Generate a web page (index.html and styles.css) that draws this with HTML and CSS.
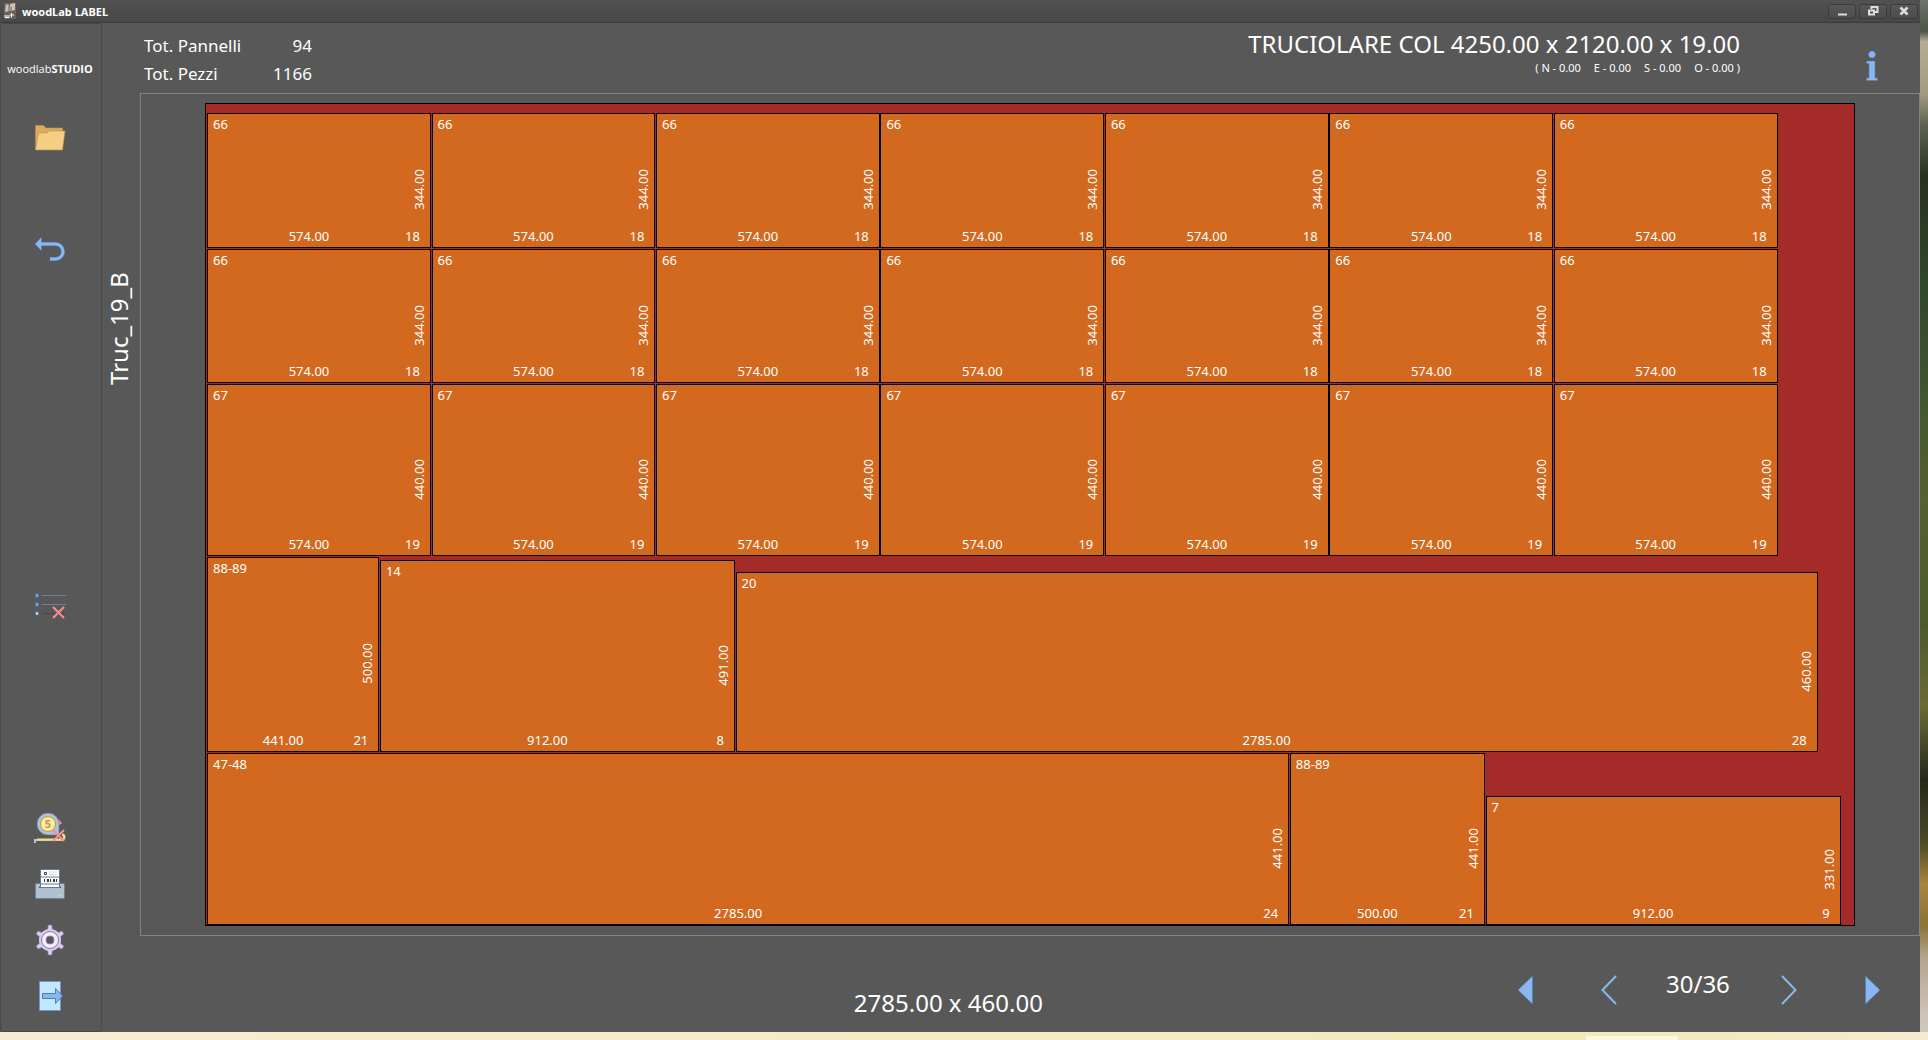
FILE: index.html
```
<!DOCTYPE html>
<html lang="it">
<head>
  <meta charset="UTF-8">
  <title>woodLab LABEL</title>
  <link rel="stylesheet" href="styles.css">
</head>
<body>
  <div class="window">

    <!-- Barra del titolo -->
    <header class="titlebar">
      <svg class="app-icon" viewBox="0 0 12 16">
        <rect width="12" height="16" rx="1" fill="#6d6258"/>
        <path d="M2 1l3 1v6l-4 1zM6 1l5-1v7l-5 1z" fill="#c9c2ba"/>
        <path d="M4 3l4 1v4H4z" fill="#9a9088"/>
        <path d="M1 12v2.500h2V12m0 2.500h2V12M7.500 10v4.500m-1.500-2.500h4" fill="none" stroke="#fff"/>
      </svg>
      <h1>woodLab LABEL</h1>
      <div class="win-buttons">
        <button aria-label="Riduci"><svg viewBox="0 0 12 12"><path d="M2 9.500h9" stroke="#ddd" stroke-width="2"/></svg></button>
        <button aria-label="Ripristina"><svg viewBox="0 0 12 12"><path d="M4.500 4V2h6v5H8M2 5.500h5v4H2z" fill="none" stroke="#ddd" stroke-width="2"/></svg></button>
        <button aria-label="Chiudi"><svg viewBox="0 0 12 12"><path d="M2.500 2.500l7 7m0-7l-7 7" stroke="#ddd" stroke-width="2.500"/></svg></button>
      </div>
    </header>

    <div class="main">

      <!-- Barra laterale -->
      <nav class="sidebar">
        <div class="logo">woodlab<b>STUDIO</b></div>
        <button class="open" aria-label="Apri">
          <svg viewBox="0 0 32 32">
            <path d="M1.500 28V3.500h8l2.500 2.500h16.500v4" fill="#dbab5e" stroke="#c08f45" stroke-width=".6"/>
            <path d="M1.500 28L4.500 11H13l2.500-2H31l-2.500 19z" fill="#f5ce85" stroke="#c08f45" stroke-width=".6"/>
          </svg>
        </button>
        <button class="undo" aria-label="Annulla">
          <svg viewBox="0 0 32 32">
            <path d="M7 10h14.500a7.500 7.500 0 0 1 0 15H16" fill="none" stroke="#4a78b5" stroke-width="4"/>
            <path d="M7.500 3v14L1 10z" fill="#8bb7f0" stroke="#4a78b5" stroke-width=".6"/>
            <path d="M6 10h15.500a7.500 7.500 0 0 1 0 15H16" fill="none" stroke="#8bb7f0" stroke-width="3"/>
          </svg>
        </button>
        <button class="clear" aria-label="Svuota elenco">
          <svg viewBox="0 0 32 32">
            <path d="M8 5.500h24M8 14.500h24" stroke="#6c8290"/>
            <path d="M8 23.500h24" stroke="#474747"/>
            <path d="M1.500 4h3v3h-3zM1.500 13h3v3h-3z" fill="#8bb7f0" stroke="#4a78b5"/>
            <path d="M1.500 22h3v3h-3z" fill="#dff0fe" stroke="#4a78b5"/>
            <path d="M19 17l11 11m0-11L19 28" stroke="#f78f8f" stroke-width="2"/>
          </svg>
        </button>
        <button class="measure" aria-label="Elimina misure">
          <svg viewBox="0 0 32 32">
            <path d="M1 31v-4M2 28h25c4 0 4-5 1-5" fill="none" stroke="#b8c4d0" stroke-width="2"/>
            <path d="M3 27.500h24c5 0 4-5 1-5" fill="none" stroke="#f7dc7c" stroke-width="2"/>
            <path d="M24 7l4 4-4 3z" fill="#f78f8f"/>
            <path d="M14 1a11 11 0 0 0 0 22h11V12A11 11 0 0 0 14 1z" fill="#b0c1d4" stroke="#66798f" stroke-width=".6"/>
            <circle cx="14" cy="12" r="7.500" fill="#fdeaa3" stroke="#ba9b48"/>
            <text x="14" y="16" class="glyph">5</text>
            <path d="M19 18l11 11m0-11L19 29" stroke="#f78f8f" stroke-width="2"/>
          </svg>
        </button>
        <button class="print" aria-label="Stampa etichette">
          <svg viewBox="0 0 32 32">
            <rect x="1.500" y="15.500" width="29" height="15" rx="1" fill="#b0c1d4" stroke="#66798f" stroke-width=".6"/>
            <path d="M5 18.500h22v1.500H5z" fill="#4e5f72"/>
            <path d="M6.500 1.500h19v18h-19z" fill="#fff" stroke="#66798f"/>
            <path d="M7 9h18M7 16h18" stroke="#66798f"/>
            <path d="M10.500 4.500h2v2h-2z" fill="none" stroke="#36404d"/>
            <path d="M15 4h8M15 6.500h8" stroke="#d5dbe0"/>
            <path d="M10 12.500h13" stroke="#36404d" stroke-width="3" stroke-dasharray="1 2 2 1"/>
            <path d="M26 27h1v1h-1z" stroke="#fbe08b"/>
          </svg>
        </button>
        <button class="settings" aria-label="Impostazioni">
          <svg viewBox="0 0 32 32">
            <g fill="#d9cdef" stroke="#8b75a1" stroke-width=".6">
              <path id="teeth" d="M13.500 6l.8-5h3.400l.8 5zM13.500 26l.8 5h3.400l.8-5z"/>
              <use href="#teeth" transform="rotate(60 16 16)"/>
              <use href="#teeth" transform="rotate(120 16 16)"/>
            </g>
            <circle cx="16" cy="16" r="11" fill="#d9cdef"/>
            <circle cx="16" cy="16" r="8.500" fill="#f3eef8" stroke="#8b75a1"/>
            <circle cx="16" cy="16" r="4" fill="#585858" stroke="#8b75a1"/>
          </svg>
        </button>
        <button class="exit" aria-label="Esci">
          <svg viewBox="0 0 32 32">
            <path d="M5.500 1.500h21v29h-21z" fill="#c2e8ff" stroke="#7496c4"/>
            <path d="M8.500 13.500h13v-5l7 7.500-7 7.500v-5h-13z" fill="#8bb7f0" stroke="#4e7ab5"/>
          </svg>
        </button>
      </nav>

      <div class="work">

        <!-- Intestazione pannello -->
        <section class="info">
          <dl class="totals">
            <dt>Tot. Pannelli</dt><dd>94</dd>
            <dt>Tot. Pezzi</dt><dd>1166</dd>
          </dl>
          <div class="material">
            <h2>TRUCIOLARE COL 4250.00 x 2120.00 x 19.00</h2>
            <p><span>( N - 0.00</span><span>E - 0.00</span><span>S - 0.00</span><span>O - 0.00 )</span></p>
          </div>
          <button class="about" aria-label="Informazioni">
            <svg viewBox="0 0 16 32">
              <circle cx="8" cy="4.500" r="3.500" fill="#8bb7f0" stroke="#4e7ab5" stroke-width=".6"/>
              <path d="M2.500 11h8.500v17h2.500v2.500h-11V28H5V13.500H2.500z" fill="#8bb7f0" stroke="#4e7ab5" stroke-width=".6"/>
            </svg>
          </button>
        </section>

        <div class="plan">
          <div class="plan-name">Truc_19_B</div>
          <div class="stage">
            <!-- Schema di taglio, misure in mm -->
            <div class="board" id="board"></div>
          </div>
        </div>

        <!-- Navigazione schemi -->
        <footer class="footer">
          <output class="selected">2785.00 x 460.00</output>
          <div class="pager">
            <button aria-label="Primo"><svg viewBox="0 0 16 30"><path d="M15.500 1v28L1 15z" fill="#8bb7f0" stroke="#4e7ab5" stroke-width=".6"/></svg></button>
            <button aria-label="Precedente"><svg viewBox="0 0 16 30"><path d="M15 1L1.500 15 15 29" fill="none" stroke="#8bb7f0" stroke-width="2"/></svg></button>
            <span>30/36</span>
            <button aria-label="Successivo"><svg viewBox="0 0 16 30"><path d="M1 1l13.500 14L1 29" fill="none" stroke="#8bb7f0" stroke-width="2"/></svg></button>
            <button aria-label="Ultimo"><svg viewBox="0 0 16 30"><path d="M.5 1v28L15 15z" fill="#8bb7f0" stroke="#4e7ab5" stroke-width=".6"/></svg></button>
          </div>
        </footer>
      </div>
    </div>
  </div>
  <script src="script.js"></script>
</body>
</html>
```
FILE: styles.css
```
* {
  box-sizing: border-box;
}
body {
  margin: 0;
  height: 100vh;
  padding: 0 8px 8px 0;
  color: #fff;
  font-family: "Noto Sans", sans-serif;
  background:
    linear-gradient(#fbf7e0, #fbf7e0) 86.4% 100% / 92px 4px no-repeat,
    linear-gradient(90deg, #f6ecd2, #f4ebc4 50%, #f3e9b8 85%, #f6ead0) bottom / 100% 8px no-repeat,
    linear-gradient(#6d7368, #4d5548 3%, #b5ad92 4%, #a39c80 9%, #5d6350 12%, #27301f 17%, #2f4529 26%, #40562f 38%, #56602f 48%, #4c5a2a 60%, #6a6a34 68%, #23281a 75%, #4c4a24 81%, #a8843c 85%, #8a7438 89%, #b5a48c 92%, #cfc6bb 98%);
}
h1, h2, p, dl, dd {
  margin: 0;
  font-weight: normal;
}
button {
  padding: 0;
  border: none;
  background: none;
  cursor: pointer;
}
svg {
  display: block;
}
.window {
  display: flex;
  flex-direction: column;
  height: 100%;
  background: #585858;
}

/* barra del titolo */
.titlebar {
  display: flex;
  align-items: center;
  gap: 6px;
  height: 23px;
  padding: 0 2px 0 4px;
  background: linear-gradient(#515151, #484848);
  border-bottom: 1px solid #3c3c3c;
}
.app-icon {
  width: 12px;
  height: 16px;
}
.titlebar h1 {
  flex: 1;
  font-size: 11px;
  font-weight: bold;
}
.win-buttons {
  display: flex;
  gap: 3px;
}
.win-buttons button {
  width: 28px;
  height: 15px;
  border: 1px solid #3c3c3c;
  border-radius: 3px;
  background: linear-gradient(#585858, #4c4c4c);
}
.win-buttons svg {
  width: 12px;
  height: 12px;
  margin: auto;
}

.main {
  display: flex;
  flex: 1;
  min-height: 0;
}

/* barra laterale */
.sidebar {
  display: flex;
  flex-direction: column;
  align-items: center;
  width: 102px;
  padding: 37px 2px 19px 0;
  border: 1px solid #484848;
  border-radius: 3px;
}
.logo {
  font-family: "Open Sans", sans-serif;
  font-size: 11px;
  line-height: 16px;
}
.sidebar button {
  margin-bottom: 24px;
}
.sidebar svg {
  width: 32px;
  height: 32px;
}
.sidebar .open {
  margin: 45px 0 80px;
}
.sidebar .clear {
  margin: auto 0 190px;
}
.sidebar .exit {
  margin-bottom: 0;
}
.glyph {
  font: bold 11px "Noto Sans", sans-serif;
  text-anchor: middle;
  fill: #ba9b48;
}

/* area di lavoro */
.work {
  display: flex;
  flex: 1;
  flex-direction: column;
  min-width: 0;
}
.info {
  display: flex;
  align-items: flex-start;
  height: 70px;
  padding: 7px 40px 0 42px;
}
.totals {
  display: grid;
  grid-template-columns: 100px 68px;
  padding-top: 2px;
  font-size: 17px;
  line-height: 28px;
}
.totals dd {
  text-align: right;
}
.material {
  flex: 1;
  text-align: right;
}
.material h2 {
  font-size: 24px;
  line-height: 28px;
}
.material p {
  display: flex;
  justify-content: flex-end;
  gap: 13px;
  font-size: 11px;
  line-height: 20px;
}
.about {
  margin: 20px 0 0 124px;
}
.about svg {
  width: 16px;
  height: 32px;
}

.plan {
  display: flex;
  flex: 1;
  min-height: 0;
}
.plan-name {
  width: 38px;
  height: 300px;
  padding-top: 8px;
  font-size: 24px;
  line-height: 34px;
  writing-mode: vertical-rl;
  transform: rotate(180deg);
}
.stage {
  display: flex;
  flex: 1;
  align-items: center;
  justify-content: center;
  border: 1px solid #848484;
  container-type: size;
}

/* --mm: quanto vale un millimetro del pannello sullo schermo */
.board {
  --mm: min((100cqh - 18px) / 2120, (100cqw - 18px) / 4250);
  --kerf: calc(var(--mm) * 4.8 - 1px);
  display: flex;
  flex-direction: column;
  justify-content: flex-end;
  gap: var(--kerf);
  width: calc(var(--mm) * 4250);
  height: calc(var(--mm) * 2120);
  padding-left: 1px;
  background: #a52a2a;
  border: 1px solid #000;
}
.strip {
  display: flex;
  align-items: flex-end;
  gap: calc(var(--mm) * 4.2 - 1px);
}
.piece {
  display: grid;
  grid-template: 22px 1fr 22px / 1fr auto 1fr;
  flex: none;
  width: calc(var(--mm) * var(--w) + 1px);
  height: calc(var(--mm) * var(--h) + 1px);
  background: #d2691e;
  border: 1px solid #000;
  font-size: 13px;
  line-height: 22px;
}
.code {
  grid-area: 1 / 1;
  padding-left: 5px;
  line-height: 20px;
}
.height {
  grid-area: 1 / 3 / 4 / 4;
  place-self: center end;
  margin-top: 18px;
  line-height: 22px;
  writing-mode: vertical-rl;
  transform: rotate(180deg);
}
.width {
  grid-area: 3 / 2;
  padding-right: 20px;
}
.qty {
  grid-area: 3 / 3;
  padding-right: 10px;
  text-align: right;
}

.footer {
  display: grid;
  grid-template-columns: 6fr auto 7fr;
  height: 96px;
}
.selected {
  grid-column: 2;
  align-self: center;
  padding-top: 38px;
  font-size: 24px;
  line-height: 28px;
}
.pager {
  display: flex;
  align-items: center;
  justify-content: flex-end;
  padding-right: 39px;
}
.pager svg {
  width: 16px;
  height: 30px;
}
.pager button {
  margin: 12px 0 0 68px;
}
.pager span {
  width: 62px;
  margin-left: 49px;
  font-size: 24px;
  line-height: 28px;
  text-align: center;
}
.pager span + button {
  margin-left: 53px;
}
```
FILE: script.js
```
// strisce di pezzi: [codice, larghezza, altezza, numero]
const strips = [
  Array(7).fill(["66", 574, 344, 18]),
  Array(7).fill(["66", 574, 344, 18]),
  Array(7).fill(["67", 574, 440, 19]),
  [["88-89", 441, 500, 21], ["14", 912, 491, 8], ["20", 2785, 460, 28]],
  [["47-48", 2785, 441, 24], ["88-89", 500, 441, 21], ["7", 912, 331, 9]]
];

document.getElementById("board").innerHTML = strips.map(strip => `
  <div class="strip">
    ${strip.map(([code, w, h, qty]) => `
      <div class="piece" style="--w: ${w}; --h: ${h}">
        <span class="code">${code}</span>
        <span class="height">${h.toFixed(2)}</span>
        <span class="width">${w.toFixed(2)}</span>
        <span class="qty">${qty}</span>
      </div>`).join("")}
  </div>`).join("");
```
